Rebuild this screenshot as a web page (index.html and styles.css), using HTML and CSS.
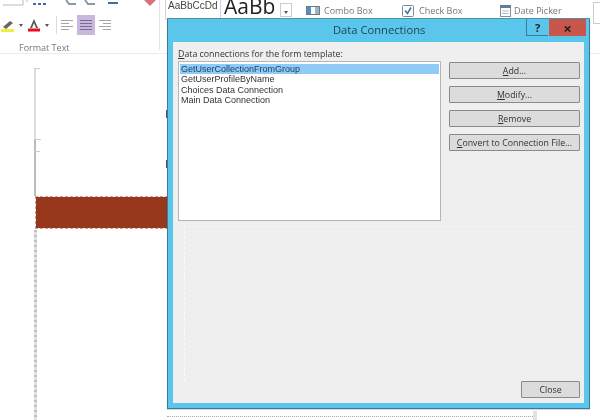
FILE: index.html
```html
<!DOCTYPE html>
<html lang="en">
<head>
  <meta charset="UTF-8" />
  <title>Data Connections</title>
  <link rel="stylesheet" href="styles.css">
</head>
<body>
  <div class="screen">
    <!-- Ribbon -->
    <div class="ribbon">
      <div class="format-group">
        <svg class="top-icons" width="160" height="8" viewBox="0 0 160 8">
          <path d="M3 5h20v-5M27 0v2" fill="none" stroke="#bbb"/>
          <path d="M33 4h3M38 4h3M43 4h3" stroke="#3a6ea5" stroke-width="2"/>
          <path d="M66 0l3 4h7M85 0l3 4h7" fill="none" stroke="#8a98a6" stroke-width="2"/>
          <path d="M108 3h10" stroke="#3a6ea5" stroke-width="2"/>
          <path d="M144 0l6 6 6-6z" fill="#d9707c"/>
        </svg>
        <div class="tool-row">
          <svg width="14" height="14" viewBox="0 0 14 14">
            <path d="M2 9l7-6 3 2-7 6z" fill="#666"/>
            <rect x="0" y="11" width="13" height="3" fill="#f4ee3a"/>
          </svg>
          <span class="caret"></span>
          <svg width="14" height="14" viewBox="0 0 14 14">
            <path d="M7 1l4 9H9L7 5 5 10H3z" fill="#555"/>
            <rect x="1" y="10.500" width="12" height="3" fill="#e8101c"/>
          </svg>
          <span class="caret"></span>
          <span class="ribbon-sep"></span>
          <span class="align"><i></i><i class="short"></i><i></i><i class="short"></i></span>
          <span class="align selected"><i></i><i></i><i></i><i></i></span>
          <span class="align"><i></i><i class="short right"></i><i></i><i class="short right"></i></span>
        </div>
        <div class="group-label">Format Text</div>
      </div>

      <div class="gallery">
        <span class="style-small">AaBbCcDd</span>
        <span class="style-big">AaBb</span>
        <span class="gallery-more"><span class="caret"></span></span>
      </div>

      <div class="controls">
        <span class="control control-combo">
          <svg width="14" height="10" viewBox="0 0 14 10">
            <rect x="0.500" y="0.500" width="13" height="8" fill="#fff" stroke="#777"/>
            <rect x="1" y="1" width="4" height="7" fill="#4d8fd1"/>
            <rect x="9" y="1" width="4" height="7" fill="#9cb4c8"/>
          </svg>
          Combo Box
        </span>
        <span class="control control-check">
          <svg width="12" height="12" viewBox="0 0 12 12">
            <rect x="0.500" y="0.500" width="11" height="11" rx="1" fill="#fff" stroke="#7d8b99"/>
            <path d="M3 5.500l2.500 3L9 2.500" fill="none" stroke="#3a70a8" stroke-width="1.500"/>
          </svg>
          Check Box
        </span>
        <span class="control control-date">
          <svg width="13" height="13" viewBox="0 0 13 13">
            <rect x="1.500" y="2.500" width="10" height="10" fill="#fff" stroke="#8a8f96"/>
            <rect x="1" y="1" width="11" height="3" fill="#5f7f9c"/>
            <path d="M3 7h7M3 9.500h7" stroke="#b5bcc4"/>
          </svg>
          Date Picker
        </span>
      </div>
      <span class="ribbon-end"></span>
    </div>

    <!-- Form page behind the dialog -->
    <div class="doc">
      <div class="ruler">
        <div class="red-band"></div>
      </div>
    </div>

    <!-- Dialog -->
    <div class="dialog">
      <div class="title-bar">
        <span class="title">Data Connections</span>
        <span class="help-btn">?</span>
        <span class="close-btn">×</span>
      </div>
      <div class="dialog-body">
        <label class="list-label"><u>D</u>ata connections for the form template:</label>
        <div class="main-row">
          <ul class="listbox">
            <li class="active">GetUserCollectionFromGroup</li>
            <li>GetUserProfileByName</li>
            <li>Choices Data Connection</li>
            <li>Main Data Connection</li>
          </ul>
          <div class="actions">
            <button type="button"><u>A</u>dd...</button>
            <button type="button"><u>M</u>odify...</button>
            <button type="button"><u>R</u>emove</button>
            <button type="button"><u>C</u>onvert to Connection File...</button>
          </div>
        </div>
        <div class="details"></div>
        <div class="dialog-footer">
          <button type="button">Close</button>
        </div>
      </div>
    </div>
    <div class="page-dots"></div>
  </div>
</body>
</html>
```

FILE: styles.css
```css
body {
  margin: 0;
  background: #fff;
  font-family: "Open Sans", "Liberation Sans", sans-serif;
  color: #333;
}

.screen {
  position: relative;
  width: 600px;
  height: 420px;
  overflow: hidden;
  background: #fff;
  filter: blur(0.55px);
}

/* Ribbon */
.ribbon {
  display: flex;
  height: 54px;
  box-sizing: border-box;
  border-bottom: 1px solid #ececec;
}

.format-group {
  width: 160px;
  flex: none;
  box-sizing: border-box;
  border-right: 1px solid #e4e4e4;
  margin-bottom: 3px;
}

.top-icons {
  display: block;
}

.tool-row {
  display: flex;
  align-items: center;
  height: 20px;
  margin-top: 7px;
  padding-left: 1px;
}

.caret {
  display: inline-block;
  width: 0;
  height: 0;
  margin: 0 4px 0 4px;
  border-left: 2px solid transparent;
  border-right: 2px solid transparent;
  border-top: 3px solid #555;
}

.ribbon-sep {
  width: 1px;
  height: 18px;
  margin: 0 1px 0 3px;
  background: #ddd;
}

.align {
  display: flex;
  flex-direction: column;
  justify-content: center;
  gap: 2px;
  width: 18px;
  height: 20px;
  box-sizing: border-box;
  padding: 0 3px;
  margin-right: 1px;
}

.align i {
  display: block;
  height: 1px;
  background: #a5a5a5;
}

.align i.short {
  width: 8px;
}

.align i.right {
  margin-left: auto;
}

.align.selected {
  background: #c9b8dd;
}

.align.selected i {
  background: #77708a;
}

.group-label {
  margin-top: 7px;
  padding-left: 19px;
  font-size: 9px;
  line-height: 12px;
  color: #777;
}

.gallery {
  display: flex;
  align-items: flex-start;
  flex: none;
  width: 134px;
  height: 20px;
  overflow: hidden;
  padding-left: 5px;
  box-sizing: border-box;
}

.style-small {
  width: 56px;
  flex: none;
  box-sizing: border-box;
  height: 20px;
  padding: 0 0 0 2px;
  border-left: 1px solid #d9cde6;
  border-right: 1px solid #d9cde6;
  font-family: "Liberation Sans", sans-serif;
  font-size: 10px;
  line-height: 12px;
  color: #444;
  white-space: nowrap;
}

.style-big {
  width: 59px;
  flex: none;
  padding-left: 3px;
  box-sizing: border-box;
  margin-top: -6px;
  font-size: 21px;
  line-height: 24px;
  color: #222;
}

.gallery-more {
  display: flex;
  align-items: flex-end;
  justify-content: center;
  flex: none;
  width: 12px;
  height: 14px;
  margin-top: 3px;
  border: 1px solid #ccc;
  box-sizing: border-box;
  padding-bottom: 2px;
}

.gallery-more .caret {
  margin: 0;
}

.controls {
  display: flex;
  align-items: flex-start;
  flex: none;
  padding-top: 2px;
  width: 299px;
  box-sizing: border-box;
  padding-left: 12px;
}

.control {
  display: flex;
  align-items: center;
  gap: 4px;
  height: 17px;
  font-size: 9px;
  color: #777;
  white-space: nowrap;
}

.control-combo {
  width: 96px;
}

.control-check {
  width: 97px;
  gap: 5px;
}

.control-date {
  gap: 2px;
}

.ribbon-end {
  width: 7px;
  height: 22px;
  margin-top: 2px;
  border: 1px solid #ccc;
  border-right: 0;
  box-sizing: border-box;
}

/* Page behind the dialog */
.doc {
  padding: 14px 0 0 34px;
}

.ruler {
  height: 352px;
  width: 133px;
  box-sizing: border-box;
  padding: 129px 0 0 2px;
  background:
    linear-gradient(#555, #555) right 42px / 1px 8px no-repeat,
    linear-gradient(#555, #555) right 92px / 1px 8px no-repeat,
    linear-gradient(#ccc, #ccc) left top / 6px 1px no-repeat,
    linear-gradient(#ccc, #ccc) left 71px / 7px 1px no-repeat,
    linear-gradient(#ccc, #ccc) left 83px / 6px 1px no-repeat,
    linear-gradient(#dcdcdc, #dcdcdc) left top / 2px 72px no-repeat,
    linear-gradient(#bbb, #bbb) left 72px / 2px 56px no-repeat,
    repeating-linear-gradient(#c0c0c0 0 2px, #e2e2e2 2px 5px) left 162px / 3px 100% no-repeat;
}

.red-band {
  height: 31px;
  background: #97371b;
  outline: 1px dashed #d9a08c;
}

/* Dialog */
.dialog {
  position: absolute;
  left: 167px;
  top: 18px;
  width: 423px;
  height: 391px;
  box-sizing: border-box;
  display: flex;
  flex-direction: column;
  padding: 0 5px 5px;
  background: #5bc6ec;
  border: 1px solid #3f7a92;
  border-top-color: #4a93ad;
  box-shadow: 0 1px 1px rgba(0, 0, 0, 0.15);
}

.title-bar {
  display: flex;
  align-items: flex-start;
  height: 23px;
  flex: none;
}

.title {
  flex: 1;
  margin-left: 160px;
  padding-top: 3px;
  font-size: 11.200px;
  line-height: 16px;
  color: #1f3f50;
}

.help-btn,
.close-btn {
  display: flex;
  align-items: center;
  justify-content: center;
  height: 17px;
  font-weight: bold;
  color: #222;
  box-sizing: border-box;
}

.help-btn {
  width: 22px;
  margin-right: 1px;
  border-left: 1px solid #3f7a92;
  border-bottom: 1px solid #3f7a92;
  font-size: 11px;
}

.close-btn {
  width: 37px;
  margin-right: -2px;
  background: #c9564c;
  font-size: 15px;
}

.dialog-body {
  flex: 1;
  display: flex;
  flex-direction: column;
  min-height: 0;
  background: #efefef;
  padding: 6px 4px 5px 5px;
}

.list-label {
  font-size: 8.800px;
  line-height: 12px;
  color: #333;
}

.main-row {
  display: flex;
  gap: 8px;
  margin-top: 1px;
}

.listbox {
  flex: none;
  width: 263px;
  height: 160px;
  box-sizing: border-box;
  margin: 0;
  padding: 2px 1px;
  list-style: none;
  background: #fff;
  border: 1px solid #b5b5b5;
  font-family: "Liberation Sans", sans-serif;
  font-size: 9px;
  line-height: 10.400px;
  color: #333;
}

.listbox li {
  padding-left: 1px;
  white-space: nowrap;
}

.listbox li.active {
  background: #8ecbf6;
  color: #20406a;
}

.actions {
  display: flex;
  flex-direction: column;
  gap: 7px;
  padding-top: 1px;
}

button {
  height: 17px;
  padding: 0;
  background: #dcdcdc;
  border: 1px solid #8a8a8a;
  border-radius: 1px;
  font-family: inherit;
  font-size: 8.800px;
  color: #333;
}

.actions button {
  width: 131px;
}

.details {
  flex: 1;
  margin: 5px 0 0 6px;
  border-left: 1px dashed #fbfbfb;
  border-top: 1px solid #f3f3f3;
}

.dialog-footer {
  display: flex;
  justify-content: flex-end;
}

.dialog-footer button {
  width: 59px;
}

.page-dots {
  position: absolute;
  left: 167px;
  top: 416px;
  width: 366px;
  border-top: 1px dotted #aaa;
}

.page-dots::after {
  content: "";
  position: absolute;
  left: 100%;
  top: -6px;
  width: 4px;
  height: 10px;
  background: #e2e2e2;
}
```
